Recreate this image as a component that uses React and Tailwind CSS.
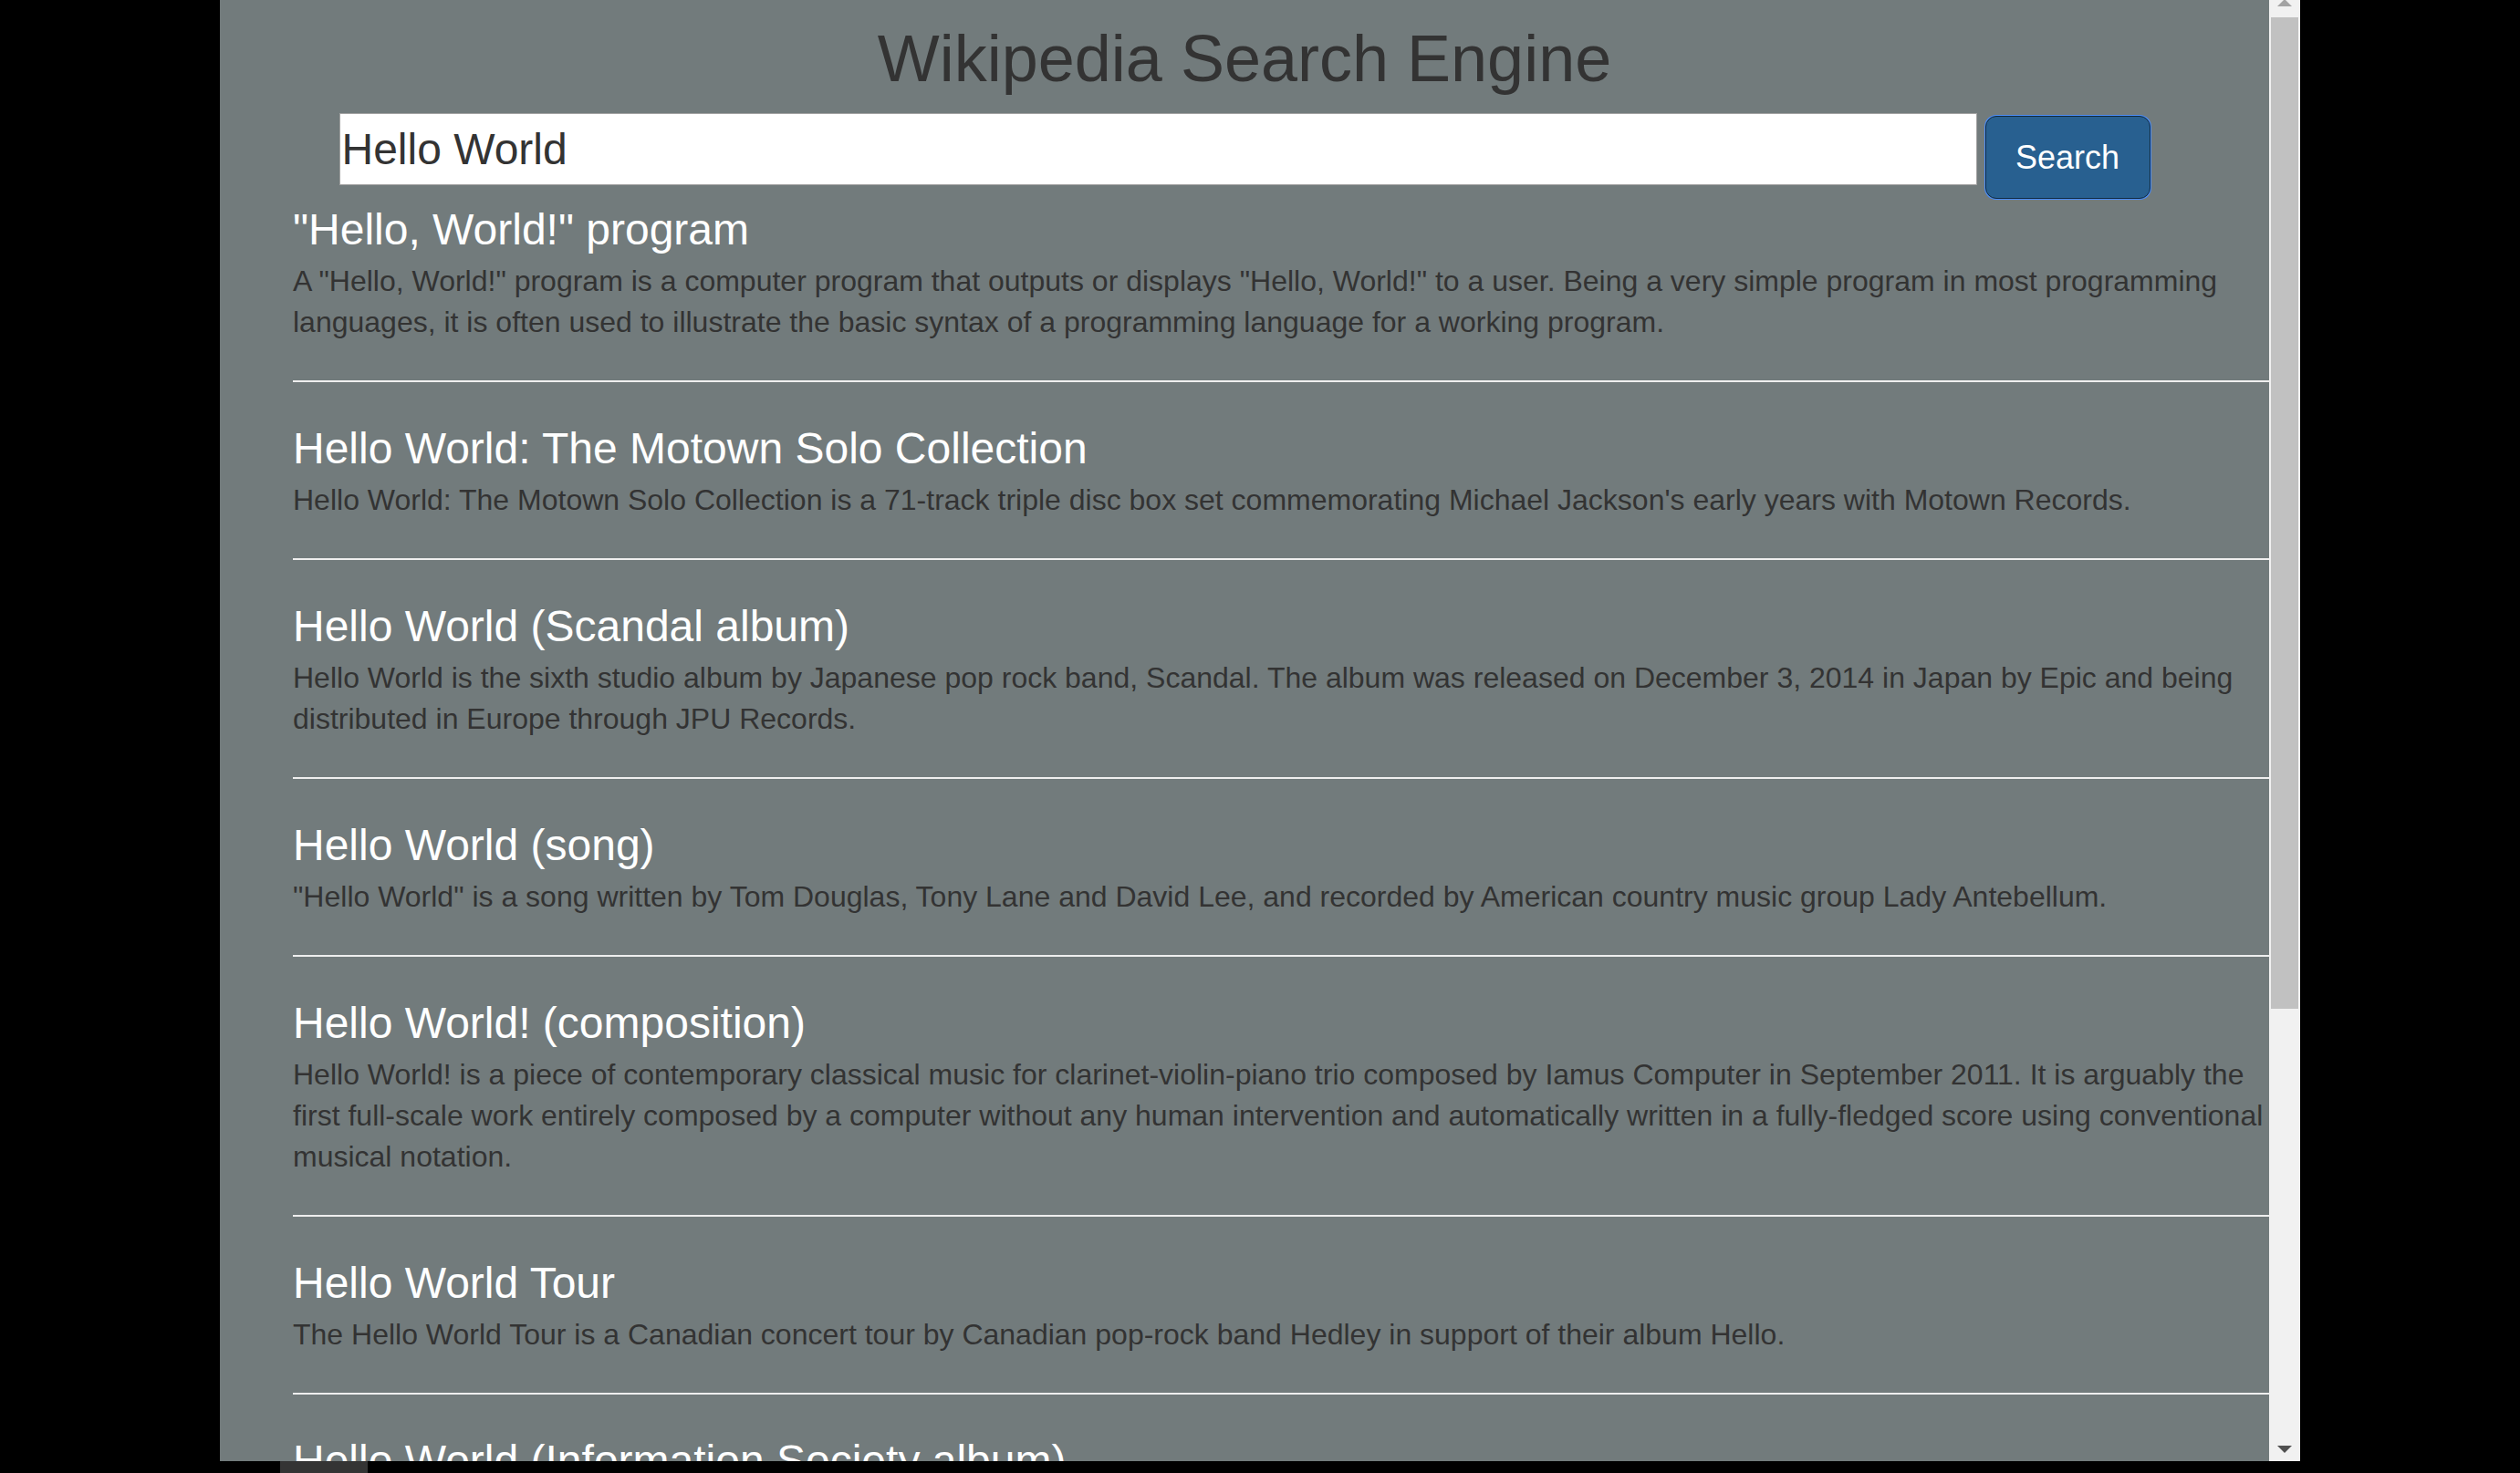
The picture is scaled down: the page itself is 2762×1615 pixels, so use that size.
import { useState } from 'react'

const results = [
  {
    title: '"Hello, World!" program',
    snippet: 'A "Hello, World!" program is a computer program that outputs or displays "Hello, World!" to a user. Being a very simple program in most programming languages, it is often used to illustrate the basic syntax of a programming language for a working program.'
  },
  {
    title: 'Hello World: The Motown Solo Collection',
    snippet: "Hello World: The Motown Solo Collection is a 71-track triple disc box set commemorating Michael Jackson's early years with Motown Records."
  },
  {
    title: 'Hello World (Scandal album)',
    snippet: 'Hello World is the sixth studio album by Japanese pop rock band, Scandal. The album was released on December 3, 2014 in Japan by Epic and being distributed in Europe through JPU Records.'
  },
  {
    title: 'Hello World (song)',
    snippet: '"Hello World" is a song written by Tom Douglas, Tony Lane and David Lee, and recorded by American country music group Lady Antebellum.'
  },
  {
    title: 'Hello World! (composition)',
    snippet: 'Hello World! is a piece of contemporary classical music for clarinet-violin-piano trio composed by Iamus Computer in September 2011. It is arguably the first full-scale work entirely composed by a computer without any human intervention and automatically written in a fully-fledged score using conventional musical notation.'
  },
  {
    title: 'Hello World Tour',
    snippet: 'The Hello World Tour is a Canadian concert tour by Canadian pop-rock band Hedley in support of their album Hello.'
  },
  {
    title: 'Hello World (Information Society album)',
    snippet: 'Hello World is the seventh studio album by American synthpop band Information Society.'
  }
]

function Scrollbar() {
  return (
    <div className="w-[34px] h-full bg-[#f1f1f1] flex flex-col shrink-0">
      <svg width="34" height="19" viewBox="0 0 34 19" className="shrink-0">
        <polygon points="9,7 25,7 17,-1" fill="#a3a3a3" />
      </svg>
      <div className="mx-[2px] h-[1087px] bg-[#c1c1c1] shrink-0"></div>
      <div className="flex-1"></div>
      <svg width="34" height="19" viewBox="0 0 34 19" className="shrink-0">
        <polygon points="9,2 25,2 17,10" fill="#505050" />
      </svg>
    </div>
  )
}

export default function App() {
  const [query, setQuery] = useState('Hello World')

  return (
    <div className="w-[2762px] h-[1615px] bg-black overflow-hidden flex flex-col font-['Liberation_Sans',Arial,sans-serif]">
      <div className="h-[1602px] flex shrink-0">
        <div className="w-[241px] shrink-0"></div>

        {/* Page */}
        <main className="w-[2246px] h-full bg-[#727b7c] overflow-hidden flex flex-col shrink-0">
          <h1 className="mt-[25px] text-center text-[72px] leading-[79px] text-[#333]">
            Wikipedia Search Engine
          </h1>

          <div className="mt-[20px] flex justify-center items-start gap-[9px]">
            <input
              type="text"
              value={query}
              onChange={(e) => setQuery(e.target.value)}
              className="w-[1795px] h-[79px] bg-white border border-[#a2a2a2] pl-[2px] pr-0 text-[48px] text-[#333] outline-none"
            />
            <button className="mt-[3px] w-[181px] h-[91px] rounded-[12px] bg-[#286090] border border-[#122b40] shadow-[0_0_0_1px_#4a8cf7] text-white text-[36px] flex items-center justify-center">
              Search
            </button>
          </div>

          <div className="pl-[80px] mt-[7px]">
            {results.map((item, i) => (
              <div key={item.title}>
                <h3 className={`${i === 0 ? '' : 'mt-[46px]'} text-[48px] leading-[53px] text-white`}>
                  {item.title}
                </h3>
                <p className="mt-[8px] text-[32px] leading-[45px] text-[#333]">{item.snippet}</p>
                <hr className="mt-[41px] h-[2px] border-0 bg-[#eeeeee]" />
              </div>
            ))}
          </div>
        </main>

        <Scrollbar />
      </div>

      {/* Bottom edge */}
      <div className="h-[13px] flex shrink-0">
        <div className="ml-[307px] w-[96px] bg-[#343434]"></div>
      </div>
    </div>
  )
}
